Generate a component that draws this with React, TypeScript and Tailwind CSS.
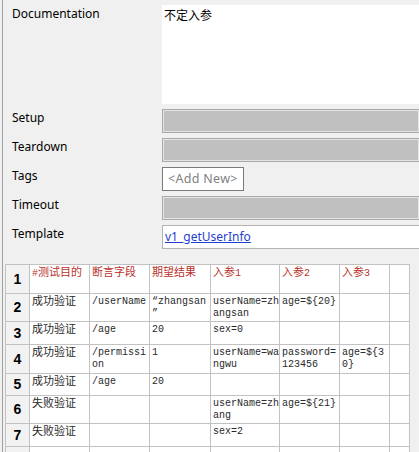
const CJK = /([\u3000-\u9fff\uff00-\uffef]+)/;

// ascii glyphs in a 6px mono, CJK runs a touch larger like SimSun
function Mixed({ text }: { text: string }) {
  return (
    <>
      {text.split(CJK).map((part, i) =>
        CJK.test(part) ? (
          <span key={i} className="text-[11px]">
            {part}
          </span>
        ) : (
          part
        ),
      )}
    </>
  );
}

const ROW_HEIGHTS = ['h-[29px]', 'h-[28px]', 'h-[23px]', 'h-[29px]', 'h-[22px]', 'h-[28px]', 'h-[23px]', 'h-[23px]'];

const ROWS: string[][] = [
  ['#测试目的', '断言字段', '期望结果', '入参1', '入参2', '入参3', ''],
  ['成功验证', '/userName', '“zhangsan\n”', 'userName=zh\nangsan', 'age=${20}', '', ''],
  ['成功验证', '/age', '20', 'sex=0', '', '', ''],
  ['成功验证', '/permissi\non', '1', 'userName=wa\nngwu', 'password=\n123456', 'age=${3\n0}', ''],
  ['成功验证', '/age', '20', '', '', '', ''],
  ['失败验证', '', '', 'userName=zh\nang', 'age=${21}', '', ''],
  ['失败验证', '', '', 'sex=2', '', '', ''],
  ['', '', '', '', '', '', ''],
];

function FormRow({ label, children }: { label: string; children: React.ReactNode }) {
  return (
    <div className="flex">
      <div className="w-[159px] shrink-0 pl-[9px] pt-px text-[12px] leading-[16px] text-black">{label}</div>
      <div className="min-w-0 flex-1">{children}</div>
    </div>
  );
}

function GrayField() {
  return (
    <div className="h-[24px] border border-r-0 border-[#a9a9a9] bg-[#c0c0c0] shadow-[inset_0_0_0_1px_#e4e4e4]" />
  );
}

export default function App() {
  return (
    <div className="h-[452px] w-[419px] overflow-hidden bg-[#f0f0f0] pl-[2px] font-['Noto_Sans','Noto_Sans_CJK_SC',sans-serif]">
      <div className="h-full border-l border-[#a0a0a0]">
        {/* settings form */}
        <div className="flex flex-col gap-[5px] pt-[5px]">
          <FormRow label="Documentation">
            <div className="h-[99px] bg-white pl-[2px] pt-[3px] text-[12px] leading-[16px] text-black">不定入参</div>
          </FormRow>
          <FormRow label="Setup">
            <GrayField />
          </FormRow>
          <FormRow label="Teardown">
            <GrayField />
          </FormRow>
          <FormRow label="Tags">
            <div className="flex h-[24px] w-[82px] items-center border border-[#7a7a7a] bg-white pl-[5px] text-[12.5px] tracking-[0.3px] text-[#7f7f7f]">
              &lt;Add New&gt;
            </div>
          </FormRow>
          <FormRow label="Timeout">
            <GrayField />
          </FormRow>
          <FormRow label="Template">
            <div className="flex h-[24px] items-center border border-r-0 border-[#b4b4b4] bg-white pl-[2px] text-[12px]">
              <span className="text-[#1f3fcf] underline">v1_getUserInfo</span>
            </div>
          </FormRow>
        </div>

        {/* test data grid, last row is cut off by the window */}
        <div className="ml-[2px] mt-[15px] grid w-max grid-cols-[24px_60px_60px_61px_69px_60px_50px_20px] border-l border-t border-[#c2c2c2]">
          {ROWS.map((cells, r) => (
            <div key={r} className="contents">
              <div
                className={`${ROW_HEIGHTS[r]} flex items-center justify-center border-b border-r border-[#c2c2c2] bg-[#f2f2f2] font-['Liberation_Sans',sans-serif] text-[14px] font-bold text-black`}
              >
                {r < 7 ? r + 1 : ''}
              </div>
              {cells.map((c, i) => (
                <div
                  key={i}
                  className={`${ROW_HEIGHTS[r]} overflow-hidden whitespace-pre border-b border-r border-[#c2c2c2] bg-white pl-[2px] pt-[2px] font-['Liberation_Mono','Noto_Sans_CJK_SC',monospace] text-[10px] leading-[12px] ${
                    r === 0 ? 'text-[#b8322c]' : 'text-[#2a2a2a]'
                  }`}
                >
                  <Mixed text={c} />
                </div>
              ))}
            </div>
          ))}
        </div>
      </div>
    </div>
  );
}
